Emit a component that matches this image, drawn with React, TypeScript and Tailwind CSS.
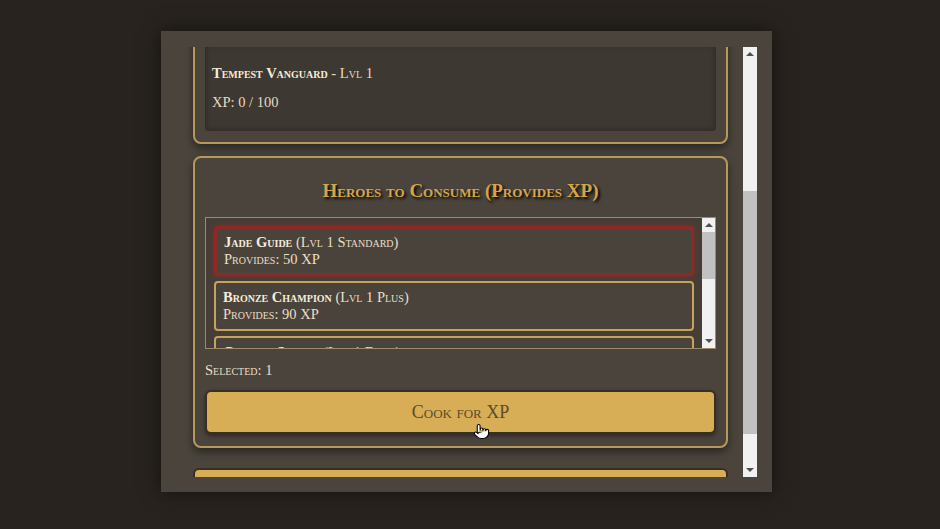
import { useLayoutEffect, useRef } from 'react';
import { Pointer } from 'lucide-react';

type Fodder = {
  id: string;
  name: string;
  level: number;
  tier: string;
  xp: number;
};

const FODDER: Fodder[] = [
  { id: 'f1', name: 'Jade Guide', level: 1, tier: 'Standard', xp: 50 },
  { id: 'f2', name: 'Bronze Champion', level: 1, tier: 'Plus', xp: 90 },
  { id: 'f3', name: 'Granite Sentry', level: 1, tier: 'Elite', xp: 140 },
  { id: 'f4', name: 'Ember Scout', level: 1, tier: 'Standard', xp: 50 },
];

const SELECTED = ['f1'];

const serif = "font-['Liberation_Serif',_'DejaVu_Serif',_serif] [font-variant:small-caps]";

function ArrowUp() {
  return (
    <div className="flex h-[14px] items-center justify-center">
      <div className="h-0 w-0 border-x-[4px] border-b-[4px] border-x-transparent border-b-[#505050]" />
    </div>
  );
}

function ArrowDown() {
  return (
    <div className="flex h-[14px] items-center justify-center">
      <div className="h-0 w-0 border-x-[4px] border-t-[4px] border-x-transparent border-t-[#505050]" />
    </div>
  );
}

export default function App() {
  const viewRef = useRef<HTMLDivElement>(null);
  const cardRef = useRef<HTMLDivElement>(null);

  useLayoutEffect(() => {
    if (viewRef.current && cardRef.current) {
      viewRef.current.scrollTop = cardRef.current.offsetTop - 109;
    }
  }, []);

  return (
    <div className={`h-[529px] w-full overflow-hidden bg-[#28231e] pl-[161px] pt-[31px] ${serif}`}>
      <div className="flex h-[461px] w-[611px] bg-[#4a443c] pb-[15px] pl-4 pr-[15px] pt-4 shadow-[0_0_18px_rgba(0,0,0,0.55)]">
        <div ref={viewRef} className="relative h-full flex-1 overflow-hidden pl-4 pr-[15px]">
          <section className="rounded-lg border-2 border-[#b8975a] px-[10px] pb-[11px] pt-3 shadow-[0_4px_8px_rgba(0,0,0,0.45)]">
            <h3 className="mb-[15px] mt-[10px] text-center text-[18px] font-bold leading-[22px] text-[#d6a54a] [text-shadow:2px_2px_3px_#000]">
              Hero to Level Up
            </h3>
            <div className="rounded-sm bg-[#3d3832] px-[7px] pb-5 pt-5 text-[14.5px] leading-[18px] text-[#e6dac2] shadow-[inset_0_0_6px_rgba(0,0,0,0.35)]">
              <p className="mb-[11px]">
                <span className="font-bold text-[#f5ecd8]">Tempest Vanguard</span> - Lvl 1
              </p>
              <p>XP: 0 / 100</p>
            </div>
          </section>

          <section
            ref={cardRef}
            className="mt-3 rounded-lg border-2 border-[#b8975a] px-[10px] pb-3 pt-3 shadow-[0_4px_8px_rgba(0,0,0,0.45)]"
          >
            <h3 className="mb-[15px] mt-[10px] text-center text-[19px] font-bold leading-[22px] text-[#d6a54a] [text-shadow:2px_2px_3px_#000]">
              Heroes to Consume (Provides XP)
            </h3>

            <div className="flex h-[132px] border border-[#9c8a68] bg-[#443e37]">
              <div className="flex flex-1 flex-col gap-[5px] overflow-hidden p-2">
                {FODDER.map((f) => {
                  const picked = SELECTED.includes(f.id);
                  return (
                    <div
                      key={f.id}
                      className={
                        picked
                          ? 'shrink-0 rounded border-[3px] border-[#8e2a25] bg-[#4a433b] px-[7px] py-[5px] text-[14.5px] leading-[17px] text-[#ebdfc6] shadow-[0_0_6px_rgba(170,40,35,0.6)]'
                          : 'shrink-0 rounded border-2 border-[#c6a35d] bg-[#4a433b] px-[7px] py-[6px] text-[14.5px] leading-[17px] text-[#ebdfc6]'
                      }
                    >
                      <p>
                        <span className="font-bold text-[#f5ecd8]">{f.name}</span> (Lvl {f.level} {f.tier})
                      </p>
                      <p>Provides: {f.xp} XP</p>
                    </div>
                  );
                })}
              </div>
              <div className="flex w-[13px] flex-col bg-[#f1f1f1]">
                <ArrowUp />
                <div className="h-[47px] bg-[#c1c1c1]" />
                <div className="flex-1" />
                <ArrowDown />
              </div>
            </div>

            <p className="mt-3 text-[14.5px] leading-[18px] text-[#ebdfc6]">Selected: 1</p>

            <div className="relative mt-[11px]">
              <button
                type="button"
                className="h-[44px] w-full rounded-md border-2 border-[#3a2e21] bg-[#d7ae55] text-[18px] text-[#5c4a2d] shadow-[0_2px_4px_rgba(0,0,0,0.4)]"
              >
                Cook for XP
              </button>
              <Pointer
                size={17}
                className="pointer-events-none absolute left-[268px] top-[33px] fill-white text-black"
                strokeWidth={1.5}
              />
            </div>
          </section>

          <button
            type="button"
            className="mb-4 mt-5 h-[40px] w-full rounded-md border-2 border-[#3a2e21] bg-[#d7ae55] text-[18px] text-[#5c4a2d]"
          >
            Back to Roster
          </button>
        </div>

        <div className="flex w-[14px] flex-col bg-[#f1f1f1]">
          <ArrowUp />
          <div className="h-[130px]" />
          <div className="h-[243px] bg-[#c1c1c1]" />
          <div className="flex-1" />
          <ArrowDown />
        </div>
      </div>
    </div>
  );
}
